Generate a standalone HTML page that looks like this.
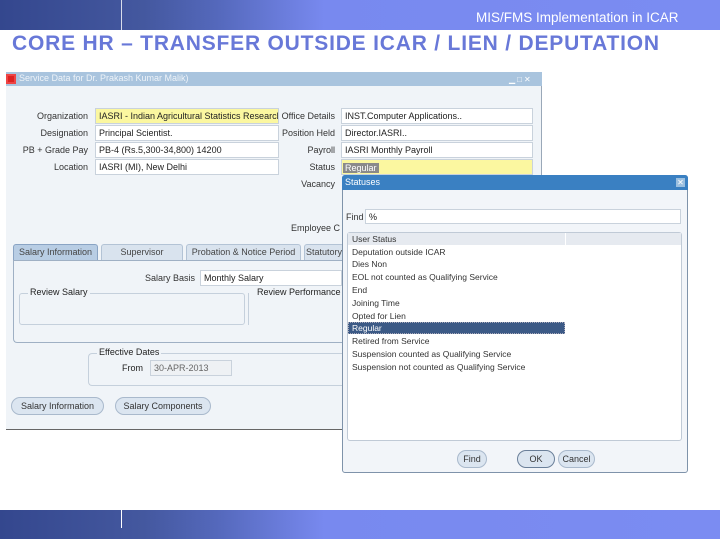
<!DOCTYPE html>
<html><head><meta charset="utf-8"><style>
*{margin:0;padding:0;box-sizing:border-box}
body{width:720px;height:540px;background:#fff;position:relative;overflow:hidden;font-family:"Liberation Sans",sans-serif;font-size:9px;color:#222}
.a{position:absolute;white-space:nowrap}
.f{position:absolute;background:#fff;border:1px solid #c9d2dc;height:16px;line-height:14px;padding-left:3px;font-size:9px;overflow:hidden;white-space:nowrap}
.l{position:absolute;text-align:right;font-size:9px;line-height:16px;color:#333}
.tab{position:absolute;top:244px;height:17px;border:1px solid #b3c3d5;border-bottom:none;background:#d9e3ee;text-align:center;line-height:15px;font-size:9px;color:#444;border-radius:3px 3px 0 0}
.btn{position:absolute;height:18px;border:1px solid #a9b9cc;border-radius:9px;background:#dbe5f0;text-align:center;line-height:16px;font-size:9px;color:#333}
.row{position:absolute;left:352px;font-size:8.5px;color:#333;line-height:12px}
</style></head><body>
<div class="a" style="left:0;top:0;width:720px;height:30px;background:linear-gradient(90deg,#34478e 0%,#44589f 20%,#5468bb 30%,#7889ef 45%,#7b8cf2 100%)"></div>
<div class="a" style="left:121px;top:0;width:1px;height:30px;background:#fff;opacity:.8"></div>
<div class="a" style="left:476px;top:10px;font-size:13.5px;color:#fff">MIS/FMS Implementation in ICAR</div>
<div class="a" style="left:12px;top:32px;font-size:21px;font-weight:bold;color:#6878d8;letter-spacing:0.8px">CORE HR – TRANSFER OUTSIDE ICAR / LIEN / DEPUTATION</div>
<div class="a" style="left:0;top:510px;width:720px;height:29px;background:linear-gradient(90deg,#34478e 0%,#44589f 20%,#5468bb 30%,#7889ef 45%,#7b8cf2 100%)"></div>
<div class="a" style="left:121px;top:510px;width:1px;height:18px;background:#fff"></div>

<div class="a" style="left:6px;top:72px;width:536px;height:358px;background:#f0f4f8;border-right:1px solid #9aa8b8;border-bottom:1px solid #666"></div>
<div class="a" style="left:6px;top:72px;width:536px;height:14px;background:#a9c4de"></div>
<div class="a" style="left:6px;top:74px;width:10px;height:10px;background:#d22;border:2px solid #e44"></div>
<div class="a" style="left:19px;top:73px;font-size:9px;color:#eef3f8">Service Data for Dr. Prakash Kumar Malik)</div>
<div class="a" style="left:509px;top:75px;width:30px;height:9px;font-size:8px;color:#fff;background:#a9c4de;letter-spacing:2px">▁□✕</div>

<div class="l" style="left:10px;top:108px;width:78px">Organization</div>
<div class="l" style="left:10px;top:125px;width:78px">Designation</div>
<div class="l" style="left:10px;top:142px;width:78px">PB + Grade Pay</div>
<div class="l" style="left:10px;top:159px;width:78px">Location</div>
<div class="f" style="left:95px;top:108px;width:184px;background:#fbf7a0">IASRI - Indian Agricultural Statistics Research</div>
<div class="f" style="left:95px;top:125px;width:184px">Principal Scientist.</div>
<div class="f" style="left:95px;top:142px;width:184px">PB-4 (Rs.5,300-34,800) 14200</div>
<div class="f" style="left:95px;top:159px;width:184px">IASRI (MI), New Delhi</div>
<div class="l" style="left:279px;top:108px;width:56px;background:#f0f4f8">Office Details</div>
<div class="l" style="left:270px;top:125px;width:65px">Position Held</div>
<div class="l" style="left:270px;top:142px;width:65px">Payroll</div>
<div class="l" style="left:270px;top:159px;width:65px">Status</div>
<div class="l" style="left:270px;top:176px;width:65px">Vacancy</div>
<div class="f" style="left:341px;top:108px;width:192px">INST.Computer Applications..</div>
<div class="f" style="left:341px;top:125px;width:192px">Director.IASRI..</div>
<div class="f" style="left:341px;top:142px;width:192px">IASRI Monthly Payroll</div>
<div class="f" style="left:341px;top:159px;width:192px;background:#fbf7a0;padding:1px"><span style="background:#8a8a8a;color:#fff;padding:0 2px">Regular</span></div>
<div class="a" style="left:291px;top:223px;font-size:9px;color:#333">Employee C</div>

<div class="tab" style="left:13px;width:85px;background:#b8cde4;border-color:#8aa4c4">Salary Information</div>
<div class="tab" style="left:101px;width:82px">Supervisor</div>
<div class="tab" style="left:186px;width:115px">Probation &amp; Notice Period</div>
<div class="tab" style="left:304px;width:40px">Statutory</div>
<div class="a" style="left:13px;top:260px;width:330px;height:83px;border:1px solid #9fb0c4;border-right:none;border-radius:0 0 0 4px"></div>
<div class="l" style="left:120px;top:270px;width:75px">Salary Basis</div>
<div class="f" style="left:200px;top:270px;width:142px">Monthly Salary</div>
<div class="a" style="left:19px;top:293px;width:226px;height:32px;border:1px solid #c5d0dc;border-radius:3px"></div>
<div class="a" style="left:28px;top:287px;font-size:9px;background:#f0f4f8;padding:0 2px">Review Salary</div>
<div class="a" style="left:248px;top:293px;width:95px;height:32px;border-left:1px solid #c5d0dc"></div>
<div class="a" style="left:257px;top:287px;font-size:9px;background:#f0f4f8">Review Performance</div>
<div class="a" style="left:88px;top:353px;width:255px;height:33px;border:1px solid #c5d0dc;border-right:none;border-radius:4px 0 0 4px"></div>
<div class="a" style="left:97px;top:347px;font-size:9px;background:#f0f4f8;padding:0 2px">Effective Dates</div>
<div class="a" style="left:122px;top:363px;font-size:9px">From</div>
<div class="f" style="left:150px;top:360px;width:82px;background:#eef1f4;color:#666">30-APR-2013</div>
<div class="btn" style="left:11px;top:397px;width:93px">Salary Information</div>
<div class="btn" style="left:115px;top:397px;width:96px">Salary Components</div>

<div class="a" style="left:342px;top:175px;width:346px;height:298px;background:#f2f5f9;border:1px solid #7f93aa;border-radius:3px"></div>
<div class="a" style="left:342px;top:175px;width:346px;height:15px;background:#3a80c2;border-radius:3px 3px 0 0"></div>
<div class="a" style="left:345px;top:177px;font-size:9px;color:#fff">Statuses</div>
<div class="a" style="left:676px;top:178px;width:9px;height:9px;background:#9cc0e0;color:#fff;font-size:8px;line-height:9px;text-align:center">✕</div>
<div class="a" style="left:346px;top:212px;font-size:9px;color:#333">Find</div>
<div class="f" style="left:365px;top:209px;width:316px;height:15px">%</div>
<div class="a" style="left:347px;top:232px;width:335px;height:209px;background:#fff;border:1px solid #c0cad6;border-radius:3px"></div>
<div class="a" style="left:348px;top:233px;width:333px;height:12px;background:#e6eaf0"></div>
<div class="a" style="left:565px;top:233px;width:1px;height:12px;background:#fff"></div>
<div class="row" style="top:233px">User Status</div>
<div class="row" style="top:246px">Deputation outside ICAR</div>
<div class="row" style="top:258px">Dies Non</div>
<div class="row" style="top:271px">EOL not counted as Qualifying Service</div>
<div class="row" style="top:284px">End</div>
<div class="row" style="top:297px">Joining Time</div>
<div class="row" style="top:310px">Opted for Lien</div>
<div class="a" style="left:348px;top:322px;width:217px;height:12px;background:#3c5a86;border:1px dotted #aab"></div>
<div class="row" style="top:322px;color:#fff">Regular</div>
<div class="row" style="top:335px">Retired from Service</div>
<div class="row" style="top:348px">Suspension counted as Qualifying Service</div>
<div class="row" style="top:361px">Suspension not counted as Qualifying Service</div>
<div class="btn" style="left:457px;top:450px;width:30px">Find</div>
<div class="btn" style="left:517px;top:450px;width:38px;border-color:#6a7f99">OK</div>
<div class="btn" style="left:558px;top:450px;width:37px">Cancel</div>
</body></html>
